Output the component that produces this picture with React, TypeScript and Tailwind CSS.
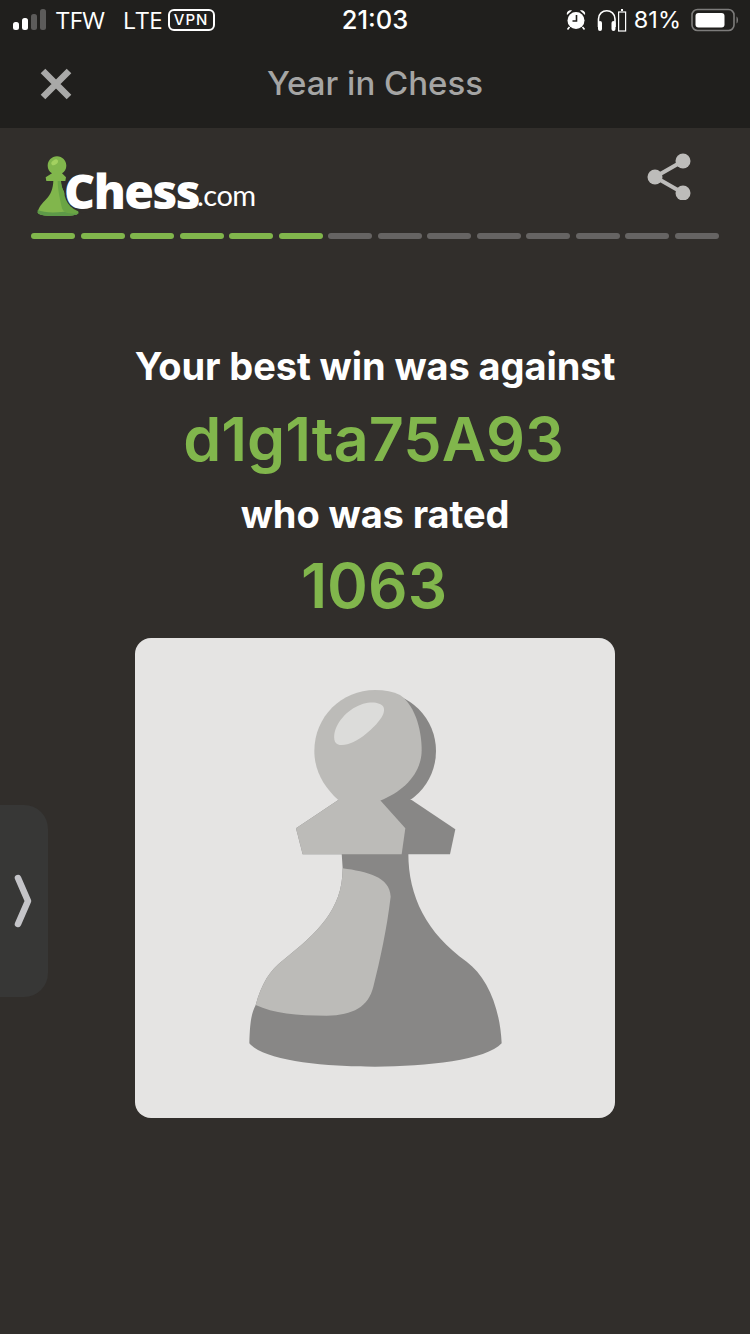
const PROGRESS = Array.from({ length: 14 }, (_, i) => i < 6);

const SignalBars = () => (
  <svg width="34" height="22" viewBox="0 0 34 22" className="block">
    <rect x="0" y="13" width="6" height="8" rx="2.5" fill="#fff" />
    <rect x="9" y="9" width="6" height="12" rx="2.5" fill="#fff" />
    <rect x="18" y="5" width="6" height="16" rx="2.5" fill="#5c5b5a" />
    <rect x="27" y="0" width="6" height="21" rx="2.5" fill="#5c5b5a" />
  </svg>
);

const AlarmIcon = () => (
  <svg width="20" height="22" viewBox="0 0 20 22" className="block">
    <circle cx="10" cy="11.5" r="8.5" fill="#fff" />
    <path d="M1 6 C0 3 3 0.5 6 1.5 Z M19 6 C20 3 17 0.5 14 1.5 Z" fill="#fff" />
    <path d="M3.5 18 L1.5 20.5 M16.5 18 L18.5 20.5" stroke="#fff" strokeWidth="1.6" />
    <path d="M10.5 6 V12 H6.5" stroke="#201f1d" strokeWidth="1.6" fill="none" />
  </svg>
);

const HeadphoneBattery = () => (
  <svg width="30" height="24" viewBox="0 0 30 24" className="block">
    <path d="M1.5 19 V11 C1.5 0 18 0 18 11 V19" stroke="#fff" strokeWidth="1.6" fill="none" />
    <rect x="1" y="13" width="4" height="10" rx="2" fill="#fff" />
    <rect x="14.5" y="13" width="4" height="10" rx="2" fill="#fff" />
    <rect x="21.6" y="4" width="7" height="19" fill="none" stroke="#fff" strokeWidth="1.2" />
    <rect x="24" y="1" width="2" height="2" fill="#fff" />
  </svg>
);

const BatteryIcon = () => (
  <svg width="48" height="24" viewBox="0 0 48 24" className="block">
    <rect x="1" y="1.5" width="42" height="21" rx="5.5" fill="none" stroke="#7d7c7b" strokeWidth="1.6" />
    <rect x="4.5" y="5" width="29" height="14.5" rx="3" fill="#fff" />
    <path d="M45.5 8.5 C47.5 9.5 47.5 14.5 45.5 15.5 Z" fill="#7d7c7b" />
  </svg>
);

const LogoPawn = () => (
  <svg width="50" height="62" viewBox="50 30 150 186" className="block">
    <path
      d="M110 34 C126 34 138 47 138 62 C138 72 133 80 125 85 L137 97 L135 108 L122 108 C122 130 135 150 150 170 C163 182 173 195 174 205 C170 212 150 213 113 213 C80 213 58 212 52 203 C54 188 65 175 78 162 C92 148 98 130 99 108 L78 108 L76 97 L95 85 C87 80 82 72 82 62 C82 47 94 34 110 34 Z"
      fill="#81b64c"
    />
    <path d="M52 195 C75 205 110 205 174 195 L174 205 C170 212 150 213 113 213 C80 213 58 212 52 203 Z" fill="#5d9948" />
    <path d="M122 108 C122 130 135 150 150 170 C163 182 173 195 174 205 C150 208 130 205 125 190 C118 160 112 130 112 108 Z" fill="#6aa544" />
    <ellipse cx="103" cy="52" rx="11" ry="7" transform="rotate(-35 103 52)" fill="#a3d160" />
    <circle cx="194" cy="140" r="62" fill="#312e2b" />
  </svg>
);

const ShareIcon = () => (
  <svg width="46" height="48" viewBox="0 0 46 48" className="block">
    <path d="M36 9 L8 25 L36 41" stroke="#bdbcba" strokeWidth="4" fill="none" />
    <circle cx="36" cy="9" r="7.5" fill="#bdbcba" />
    <circle cx="8" cy="25" r="7.5" fill="#bdbcba" />
    <circle cx="36" cy="41" r="7.5" fill="#bdbcba" />
  </svg>
);

const BigPawn = () => (
  <svg width="300" height="410" viewBox="0 0 900 1230" className="block">
    <circle cx="470" cy="243" r="178" fill="#888786" />
    <path d="M355 390 L228 475 L248 553 L690 553 L706 478 L575 390 Z" fill="#888786" />
    <path
      d="M365 550 L565 550 C565 680 620 790 740 875 C800 920 840 1010 845 1120 C800 1170 620 1190 465 1190 C300 1190 130 1170 88 1120 C90 1050 95 1030 107 1005 C125 940 150 900 190 870 C290 790 368 720 368 595 Z"
      fill="#888786"
    />
    <path
      d="M540 75 C590 110 605 190 605 240 C605 310 550 365 480 392 L355 390 C310 350 283 300 283 243 C283 140 365 60 465 60 C495 60 520 65 540 75 Z"
      fill="#bcbbb8"
    />
    <path d="M355 390 L228 475 L248 553 L545 553 L556 475 L480 390 Z" fill="#bcbbb8" />
    <path
      d="M368 595 C440 605 510 620 512 680 C500 780 480 870 460 950 C445 1010 400 1035 320 1037 C230 1037 160 1030 107 1005 C125 940 150 900 190 870 C290 790 368 720 368 595 Z"
      fill="#bcbbb8"
    />
    <path
      d="M490 110 C480 95 440 90 400 115 C360 140 335 185 345 215 C355 235 400 225 440 190 C475 160 500 130 490 110 Z"
      fill="#dcdcda"
    />
  </svg>
);

const App = () => {
  return (
    <div className="relative w-[750px] h-[1334px] overflow-hidden bg-[#312e2b] font-['Inter',sans-serif]">
      <div className="bg-[#201f1d]">
        <div className="h-[40px] flex items-center justify-between pl-[13px] pr-[11px] text-white text-[23.5px]">
          <div className="flex items-center">
            <SignalBars />
            <span className="ml-[9px] text-[24.5px] font-['Open_Sans',sans-serif]">TFW</span>
            <span className="ml-[18px] text-[24.5px] font-['Open_Sans',sans-serif]">LTE</span>
            <span className="ml-[5px] h-[22px] w-[47px] rounded-[6px] border-2 border-white flex items-center justify-center text-[15px] font-medium tracking-[1px]">
              VPN
            </span>
          </div>
          <div className="absolute left-0 right-0 text-center text-[25.5px] font-medium">21:03</div>
          <div className="flex items-center">
            <AlarmIcon />
            <span className="ml-[11px]">
              <HeadphoneBattery />
            </span>
            <span className="ml-[7px]">81%</span>
            <span className="ml-[10px]">
              <BatteryIcon />
            </span>
          </div>
        </div>
        <div className="relative h-[88px] flex items-center justify-center">
          <svg width="32" height="32" viewBox="0 0 32 32" className="absolute left-[40px] top-[28px]">
            <path d="M3 3 L29 29 M29 3 L3 29" stroke="#a9a9a8" strokeWidth="6.5" />
          </svg>
          <span className="text-[33px] font-medium text-[#a5a5a4]">Year in Chess</span>
        </div>
      </div>

      <div className="px-[31px]">
        <div className="h-[105px] flex items-start justify-between">
          <div className="relative mt-[27px] ml-[6px] flex items-end">
            <LogoPawn />
            <span className="absolute left-[27px] top-[6px] text-white text-[48px] leading-[60px] font-extrabold tracking-[-1.5px] font-['Open_Sans',sans-serif]">
              Chess
            </span>
            <span className="absolute left-[160px] top-[18px] text-white text-[29px] leading-[44px] font-normal tracking-[-0.5px] font-['Lato',sans-serif]">
              .com
            </span>
          </div>
          <div className="mt-[24px] mr-[26px]">
            <ShareIcon />
          </div>
        </div>
        <div className="flex gap-[5.5px]">
          {PROGRESS.map((done, i) => (
            <div
              key={i}
              className={`h-[6px] flex-1 rounded-full ${done ? "bg-[#81b64c]" : "bg-[#666463]"}`}
            />
          ))}
        </div>
      </div>

      <div className="flex flex-col items-center mt-[102px]">
        <div className="text-[38px] leading-[50px] font-bold tracking-[-0.1px] text-white">Your best win was against</div>
        <div className="mt-[12px] pr-[3px] text-[61px] leading-[72px] font-semibold text-[#81b64c]">d1g1ta75A93</div>
        <div className="mt-[14px] text-[38px] leading-[50px] font-bold tracking-[-0.1px] text-white">who was rated</div>
        <div className="mt-[11px] pr-[2px] text-[62px] leading-[72px] font-semibold text-[#81b64c]">1063</div>
        <div className="mt-[16px] w-[480px] h-[480px] rounded-[16px] bg-[#e5e4e3] flex justify-center pt-[32px] pr-[10px]">
          <BigPawn />
        </div>
      </div>

      <div className="absolute left-0 top-[805px] w-[48px] h-[192px] rounded-r-[24px] bg-[#373736] flex items-center">
        <svg width="20" height="56" viewBox="0 0 20 56" className="ml-[13px]">
          <path d="M5 5 L15 28 L5 51" stroke="#c4c4c8" strokeWidth="6.5" strokeLinecap="round" strokeLinejoin="round" fill="none" />
        </svg>
      </div>
    </div>
  );
};

export default App;
